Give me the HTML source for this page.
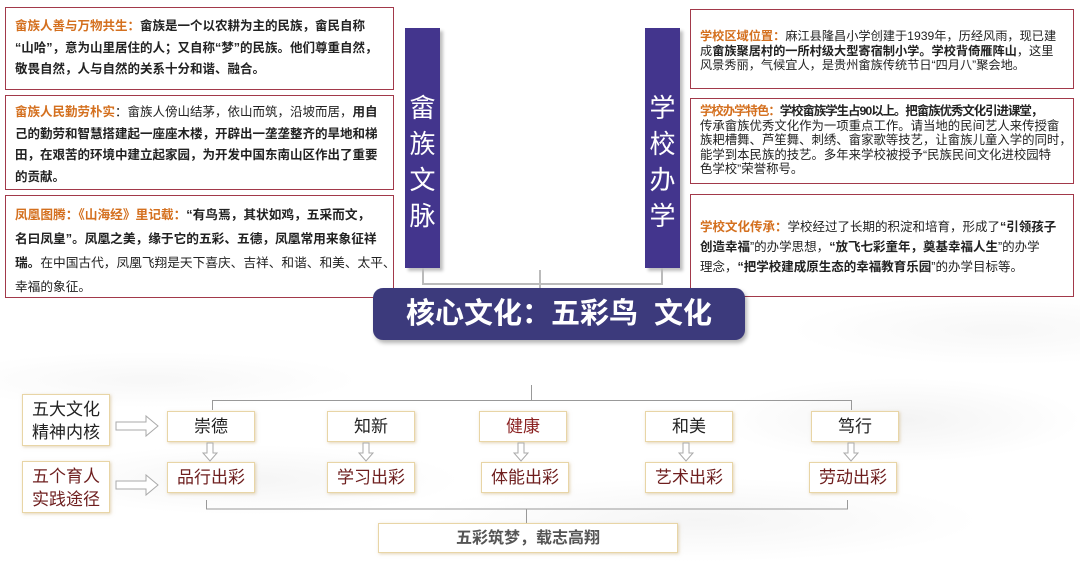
<!DOCTYPE html>
<html><head><meta charset="utf-8"><style>
*{margin:0;padding:0;box-sizing:border-box}
body{width:1080px;height:562px;position:relative;overflow:hidden;background:#fff;font-family:"Liberation Sans","Noto Sans CJK SC",sans-serif;color:#222}
.bg{position:absolute;inset:0;background:
radial-gradient(ellipse 260px 60px at 900px 420px,rgba(210,210,210,.25),transparent 70%),
radial-gradient(ellipse 300px 50px at 250px 480px,rgba(210,210,210,.22),transparent 70%),
radial-gradient(ellipse 400px 60px at 700px 520px,rgba(215,215,215,.25),transparent 70%),
radial-gradient(ellipse 300px 40px at 150px 380px,rgba(220,220,220,.22),transparent 70%),
radial-gradient(ellipse 300px 50px at 1000px 330px,rgba(220,220,220,.22),transparent 70%)}
.a{position:absolute}
.box{position:absolute;border:1.5px solid #a2394a;background:#fff;font-size:12.5px;padding:0 0 0 9px;white-space:nowrap}
.o{color:#d4701f;font-weight:bold}
.bar{position:absolute;background:#43358d;color:#fff;font-size:26px;width:35px;text-align:center;line-height:36px;padding-top:62px;box-shadow:3px 3px 3px rgba(0,0,0,.25)}
.ln{position:absolute;background:#999}
.b{position:absolute;background:#fff;border:1px solid #e8d5a6;box-shadow:1px 1px 3px rgba(200,170,110,.5);text-align:center;font-size:17px;line-height:30px;width:88px;height:31px}
.r2{color:#6e1e1e}
.lab{position:absolute;background:#fff;border:1px solid #e8d5a6;box-shadow:1px 1px 3px rgba(200,170,110,.5);font-size:17px;line-height:23px;width:88px;height:52px;text-align:center;padding-top:3px}
.ar{position:absolute}
.rb{font-size:12.2px}
</style></head><body>
<div class="bg"></div>
<div class="box" style="left:5px;top:7px;width:389px;height:83px;line-height:21.5px;padding-top:8px;font-weight:bold"><span class="o">畲族人善与万物共生：</span>畲族是一个以农耕为主的民族，畲民自称<br>“山哈”，意为山里居住的人；又自称“梦”的民族。他们尊重自然，<br>敬畏自然，人与自然的关系十分和谐、融合。</div>
<div class="box" style="left:5px;top:95px;width:389px;height:95px;line-height:21.5px;padding-top:6px"><span class="o">畲族人民勤劳朴实</span>：畲族人傍山结茅，依山而筑，沿坡而居，<b>用自<br>己的勤劳和智慧搭建起一座座木楼，开辟出一垄垄整齐的旱地和梯<br>田，在艰苦的环境中建立起家园，为开发中国东南山区作出了重要<br>的贡献。</b></div>
<div class="box" style="left:5px;top:195px;width:389px;height:103px;line-height:24px;padding-top:7px;font-size:12.7px"><span class="o">凤凰图腾：《山海经》里记载：</span><b>“有鸟焉，其状如鸡，五采而文，<br>名曰凤皇”。凤凰之美，缘于它的五彩、五德，凤凰常用来象征祥<br>瑞。</b>在中国古代，凤凰飞翔是天下喜庆、吉祥、和谐、和美、太平、<br>幸福的象征。</div>

<div class="box rb" style="left:690px;top:9px;width:384px;height:80px;line-height:14.5px;padding-top:19px"><span class="o">学校区域位置：</span>麻江县隆昌小学创建于1939年，历经风雨，现已建<br>成<b>畲族聚居村的一所村级大型寄宿制小学。学校背倚雁阵山</b>，这里<br>风景秀丽，气候宜人，是贵州畲族传统节日“四月八”聚会地。</div>
<div class="box rb" style="left:690px;top:98px;width:384px;height:86px;line-height:14.5px;padding-top:5px;font-size:12.4px"><span style="letter-spacing:-1px"><span class="o">学校办学特色：</span><b>学校畲族学生占90以上。把畲族优秀文化引进课堂，</b></span><br>传承畲族优秀文化作为一项重点工作。请当地的民间艺人来传授畲<br>族耙槽舞、芦笙舞、刺绣、畲家歌等技艺，让畲族儿童入学的同时，<br>能学到本民族的技艺。多年来学校被授予“民族民间文化进校园特<br>色学校”荣誉称号。</div>
<div class="box rb" style="left:690px;top:194px;width:384px;height:103px;line-height:20px;padding-top:22px;font-size:12.5px"><span class="o">学校文化传承：</span>学校经过了长期的积淀和培育，形成了<b>“引领孩子<br>创造幸福</b>”的办学思想，<b>“放飞七彩童年，奠基幸福人生</b>”的办学<br>理念，<b>“把学校建成原生态的幸福教育乐园</b>”的办学目标等。</div>

<div class="bar" style="left:405px;top:28px;height:240px">畲<br>族<br>文<br>脉</div>
<div class="bar" style="left:645px;top:28px;height:240px">学<br>校<br>办<br>学</div>
<div class="ln" style="left:422px;top:268px;width:2px;height:16px;background:#bbb"></div>
<div class="ln" style="left:661px;top:268px;width:2px;height:16px;background:#bbb"></div>
<div class="ln" style="left:422px;top:283px;width:241px;height:2px;background:#bbb"></div>
<div class="ln" style="left:539px;top:270px;width:2px;height:18px;background:#bbb"></div>

<div class="a" style="left:373px;top:288px;width:372px;height:52px;background:#3c3a7c;border-radius:10px;color:#fff;font-size:29px;font-weight:bold;text-align:center;line-height:52px;box-shadow:2px 3px 4px rgba(0,0,0,.3)">核心文化：五彩鸟&nbsp;&nbsp;文化</div>

<div class="ln" style="left:531px;top:385px;width:1px;height:15px"></div>
<div class="ln" style="left:212px;top:400px;width:640px;height:1px"></div>
<div class="ln" style="left:212px;top:400px;width:1px;height:10px"></div>
<div class="ln" style="left:851px;top:400px;width:1px;height:10px"></div>

<div class="lab" style="left:22px;top:394px">五大文化<br>精神内核</div>
<div class="lab r2" style="left:22px;top:461px">五个育人<br>实践途径</div>

<div class="b" style="left:167px;top:411px">崇德</div>
<div class="b" style="left:327px;top:411px">知新</div>
<div class="b" style="left:479px;top:411px;color:#8b2222">健康</div>
<div class="b" style="left:645px;top:411px">和美</div>
<div class="b" style="left:811px;top:411px">笃行</div>
<div class="b r2" style="left:167px;top:462px">品行出彩</div>
<div class="b r2" style="left:327px;top:462px">学习出彩</div>
<div class="b r2" style="left:481px;top:462px">体能出彩</div>
<div class="b r2" style="left:645px;top:462px">艺术出彩</div>
<div class="b r2" style="left:809px;top:462px">劳动出彩</div>

<svg class="ar" style="left:0;top:0" width="1080" height="562">
<g fill="#fff" stroke="#aaa" stroke-width="1">
<path d="M116 422h30v-6l12 10-12 10v-6h-30z"/>
<path d="M116 481h30v-6l12 10-12 10v-6h-30z"/>
<path d="M207 443v10h-4l7 8 7-8h-4v-10z"/>
<path d="M363 443v10h-4l7 8 7-8h-4v-10z"/>
<path d="M518 443v10h-4l7 8 7-8h-4v-10z"/>
<path d="M683 443v10h-4l7 8 7-8h-4v-10z"/>
<path d="M848 443v10h-4l7 8 7-8h-4v-10z"/>
</g>
<g stroke="#999" fill="none"><path d="M206.5 500v9h641v-9M526.5 509v14"/></g>
</svg>

<div class="b" style="left:378px;top:523px;width:300px;height:30px;font-size:16px;font-weight:bold;color:#555;line-height:30px">五彩筑梦，载志高翔</div>
</body></html>
